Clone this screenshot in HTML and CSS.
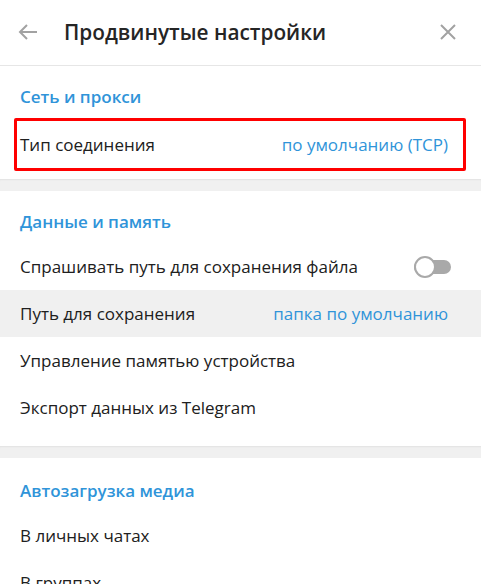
FILE: index.html
```html
<!DOCTYPE html>
<html lang="ru">
<head>
<meta charset="utf-8">
<title>Продвинутые настройки</title>
<link rel="stylesheet" href="styles.css">
</head>
<body>
<div class="panel">
  <header class="header">
    <button class="icon-btn back" aria-label="Назад">
      <svg width="22" height="18" viewBox="0 0 22 18"><path d="M20 9H3M10 2L3 9l7 7" fill="none" stroke="#a2a2a2" stroke-width="2"/></svg>
    </button>
    <h1 class="title">Продвинутые настройки</h1>
    <button class="icon-btn close" aria-label="Закрыть">
      <svg width="18" height="18" viewBox="0 0 18 18"><path d="M2 2l14 14M16 2L2 16" fill="none" stroke="#a2a2a2" stroke-width="2"/></svg>
    </button>
  </header>

  <section class="section s1">
    <div class="section-title">Сеть и прокси</div>
    <div class="annot">
      <div class="row row-annot"><span>Тип соединения</span><span class="value">по умолчанию (TCP)</span></div>
    </div>
  </section>
  <div class="divider"></div>

  <section class="section s2">
    <div class="section-title">Данные и память</div>
    <div class="row"><span>Спрашивать путь для сохранения файла</span><span class="toggle"><span class="knob"></span></span></div>
    <div class="row hover"><span>Путь для сохранения</span><span class="value">папка по умолчанию</span></div>
    <div class="row"><span>Управление памятью устройства</span></div>
    <div class="row"><span>Экспорт данных из Telegram</span></div>
  </section>
  <div class="divider"></div>

  <section class="section s3">
    <div class="section-title">Автозагрузка медиа</div>
    <div class="row"><span>В личных чатах</span></div>
    <div class="row"><span>В группах</span></div>
  </section>
</div>
</body>
</html>
```
FILE: styles.css
```css
html, body {
  margin: 0;
  padding: 0;
  background: #fff;
}
body {
  font-family: "Open Sans", "Liberation Sans", sans-serif;
  color: #202020;
  width: 481px;
  height: 584px;
  overflow: hidden;
}
.panel {
  display: flex;
  flex-direction: column;
}
.header {
  height: 66px;
  border-bottom: 1px solid #e6e6e6;
  display: flex;
  align-items: center;
  padding: 0 0 2px 0;
  box-sizing: border-box;
}
.icon-btn {
  border: 0;
  background: none;
  padding: 0;
  display: flex;
  align-items: center;
  justify-content: center;
}
.back {
  margin-left: 17px;
  width: 22px;
}
.title {
  margin: 0 0 0 25px;
  font-size: 20.8px;
  font-weight: 600;
  color: #252525;
  flex: 1;
}
.close {
  margin-right: 24px;
  width: 18px;
}
.section-title {
  color: #2f94d9;
  font-weight: 600;
  font-size: 17px;
  padding: 0 20px;
  line-height: 22px;
}
.s1 { padding-bottom: 9px; }
.s1 .section-title { padding-top: 20px; padding-bottom: 12px; }
.s2 { padding-bottom: 15px; }
.s2 .section-title { padding-top: 20px; padding-bottom: 10px; }
.s3 .section-title { padding-top: 22px; padding-bottom: 10px; }
.row {
  height: 47px;
  display: flex;
  align-items: center;
  justify-content: space-between;
  padding: 0 33px 0 20px;
  font-size: 17px;
}
.row.hover { background: #f0f0f0; }
.value { color: #2f94d9; }
.annot {
  margin: -2px 15px -1px 14px;
  border: 3px solid #ff0000;
  border-radius: 2px;
}
.row-annot {
  padding: 0 15px 0 3px;
  height: 47px;
}
.divider {
  height: 12px;
  background: #f0f0f0;
  box-shadow: inset 0 2px 2px -1px rgba(0,0,0,0.06);
}
.toggle {
  position: relative;
  width: 37px;
  height: 14px;
  margin-right: -3px;
  background: #a9a9a9;
  border-radius: 7px;
}
.knob {
  position: absolute;
  left: 0;
  top: -4px;
  width: 18px;
  height: 18px;
  border: 2px solid #a9a9a9;
  border-radius: 50%;
  background: #fff;
}
```
